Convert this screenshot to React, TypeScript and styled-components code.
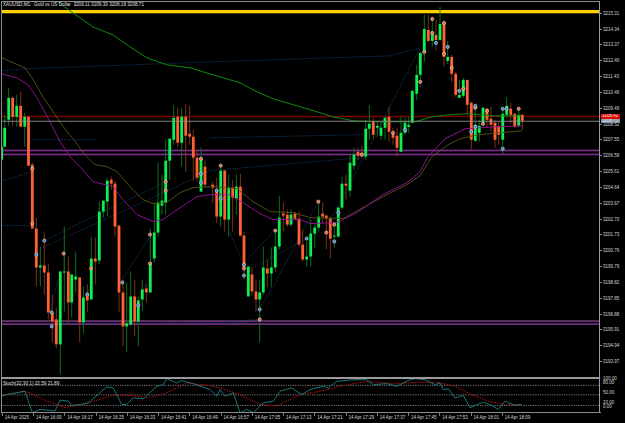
import React from 'react';
import styled, {createGlobalStyle} from 'styled-components';

type Candle = [x: number, top: number, bottom: number, high: number, low: number, up: 0 | 1];
type Pt = [number, number];

const GlobalStyle = createGlobalStyle`
  html, body {
    margin: 0;
    padding: 0;
    background: #000;
  }
`

const candles: Candle[] = [
    [1.7, 147, 160, 125, 160, 1],
    [4.7, 128, 147, 115, 147, 1], [8.7, 98, 120, 88, 126, 1], [12.7, 98, 117, 96, 126, 0], [16.7, 106, 117, 95, 127, 1],
    [20.7, 106, 127, 92, 127, 0], [24.7, 117, 127, 113, 147, 1], [28.5, 117, 166, 117, 166, 0], [32.3, 165, 229, 163, 229, 0],
    [36.3, 229, 268, 218, 287, 0], [40.3, 266, 268, 247, 287, 1], [44.3, 266, 273, 233, 295, 0], [48.3, 273, 313, 264, 320, 0],
    [52.3, 313, 322, 295, 343, 0], [56.3, 320, 345, 308, 349, 0], [60.3, 272, 345, 272, 375, 1], [64.3, 272, 273, 227, 312, 1],
    [68.3, 272, 303, 257, 325, 0], [71.7, 275, 303, 275, 318, 1], [75.7, 277, 280, 252, 293, 1], [79.7, 278, 323, 278, 343, 0],
    [83.4, 298, 323, 287, 334, 1], [87.3, 295, 301, 285, 313, 0], [91.3, 259, 300, 237, 300, 1], [95.3, 259, 262, 238, 285, 0],
    [99.3, 212, 261, 202, 265, 1], [103.3, 201, 212, 201, 218, 1], [107.3, 181, 202, 178, 217, 1], [111.3, 180, 184, 177, 190, 0],
    [115, 184, 227, 181, 237, 0], [119, 226, 293, 226, 313, 0], [123, 293, 327, 280, 347, 0], [126.7, 324, 327, 283, 353, 1],
    [130.7, 297, 325, 272, 327, 1], [134.7, 297, 322, 280, 337, 0], [138.3, 301, 322, 297, 347, 1], [142.3, 290, 300, 280, 312, 1],
    [146.3, 289, 293, 285, 303, 0], [150.3, 263, 293, 229, 293, 1], [154.3, 233, 259, 203, 263, 1], [158, 203, 233, 163, 237, 1],
    [162, 201, 206, 175, 215, 1], [165.7, 161, 203, 140, 215, 1], [169.7, 139, 161, 138, 180, 1], [173.7, 118, 140, 105, 145, 1],
    [177.7, 117, 143, 108, 147, 0], [181.7, 117, 143, 108, 167, 1], [185.7, 117, 136, 104, 172, 0], [189.7, 134, 137, 106, 145, 0],
    [193.3, 137, 158, 130, 181, 0], [197, 158, 178, 150, 182, 0], [201, 158, 192, 148, 192, 1], [205, 167, 185, 160, 188, 0],
    [212.7, 185, 188, 182, 203, 0], [216.7, 190, 217, 178, 223, 0], [220.7, 171, 217, 168, 227, 1], [224.7, 171, 220, 170, 232, 0],
    [228.7, 188, 220, 175, 237, 1], [232.7, 188, 198, 180, 232, 0], [236.4, 187, 199, 175, 215, 1], [240.4, 187, 236, 174, 237, 0],
    [244, 236, 268, 232, 280, 0], [248.3, 267, 297, 267, 297, 1], [252, 275, 292, 268, 296, 0], [256, 292, 300, 280, 312, 0],
    [259.7, 293, 300, 280, 343, 1], [263.3, 268, 293, 247, 295, 1], [267.3, 269, 274, 260, 288, 0], [271.3, 268, 274, 248, 288, 1],
    [275.3, 247, 268, 232, 272, 1], [279.3, 218, 247, 196, 250, 1], [283.3, 214, 216, 203, 232, 0], [287.3, 215, 225, 210, 227, 0],
    [291, 215, 225, 210, 227, 1], [295, 214, 219, 212, 220, 0], [299, 219, 245, 212, 247, 0], [302.7, 245, 260, 230, 262, 0],
    [306.7, 257, 260, 242, 267, 1], [310.7, 234, 257, 220, 267, 1], [314.7, 228, 234, 225, 248, 1], [318.7, 217, 228, 203, 232, 1],
    [322.7, 214, 217, 203, 223, 0], [326.3, 216, 219, 215, 250, 0], [330.3, 219, 239, 217, 259, 0], [334.3, 236, 237, 225, 248, 1],
    [338.3, 208, 237, 207, 238, 1], [342, 184, 208, 177, 210, 1], [346, 184, 186, 175, 200, 0], [350, 163, 191, 154, 197, 1],
    [354, 155, 166, 148, 170, 1], [358, 152, 156, 148, 160, 0], [362, 153, 156, 146, 158, 0], [365.7, 129, 157, 120, 160, 1],
    [369.3, 124, 129, 105, 140, 1], [373.3, 122, 135, 118, 140, 0], [377.3, 126, 128, 122, 137, 1], [381, 128, 136, 122, 140, 1],
    [385, 118, 128, 117, 140, 1], [389, 117, 132, 107, 142, 0], [393, 134, 138, 128, 145, 0], [397, 136, 148, 128, 157, 0],
    [401, 133, 152, 117, 152, 1], [405, 123, 133, 118, 135, 1], [408.7, 125, 127, 117, 133, 1], [412.3, 91, 123, 90, 124, 1],
    [416.7, 75, 94, 65, 100, 1], [420.3, 53, 75, 52, 87, 1], [424.3, 29, 53, 15, 62, 1], [428.3, 30, 41, 15, 42, 0],
    [432.3, 33, 41, 17, 47, 1], [436, 35, 40, 20, 50, 0], [440, 24, 40, 7, 41, 1], [444, 23, 57, 22, 67, 0],
    [447.7, 57, 61, 41, 64, 1], [451.7, 57, 74, 55, 82, 0], [455.7, 74, 95, 72, 97, 0], [459.3, 95, 98, 80, 98, 1],
    [463.3, 80, 96, 78, 98, 1], [467.3, 80, 105, 80, 115, 0], [471.3, 103, 140, 102, 150, 0], [475.3, 125, 141, 107, 142, 1],
    [479.3, 126, 133, 120, 142, 1], [483, 108, 123, 107, 127, 1], [487, 109, 120, 108, 128, 0], [491, 119, 125, 107, 132, 0],
    [495, 123, 140, 120, 148, 0], [498.7, 127, 135, 122, 145, 0], [502.7, 114, 140, 110, 154, 1], [506.7, 106, 115, 97, 118, 1],
    [510.7, 109, 115, 103, 124, 0], [514.7, 114, 127, 113, 128, 0], [518.7, 115, 126, 110, 127, 1], [522.3, 115, 121, 114, 130, 0],
];

const redDots: Pt[] = [
    [432.3, 19], [432.3, 33], [444, 23], [444, 54], [424.3, 52], [420.3, 82], [451.7, 68], [463.3, 89], [475.3, 108], [487, 111],
    [483, 124], [518.7, 109], [393, 133], [220.7, 166], [244, 269], [275.3, 231], [318.3, 202], [326.3, 233], [334.3, 225], [361.7, 155],
    [32.3, 169], [32.3, 224], [63.7, 254], [91, 269], [150, 235], [150, 264], [165.7, 182], [165.7, 191], [201, 159], [259.7, 320],
];

const blueDots: Pt[] = [
    [436, 43], [447.7, 47], [459.3, 91], [475.3, 106], [502.7, 109], [506.7, 109], [475.3, 127], [471.3, 132], [502.7, 149], [405, 130],
    [216.7, 191], [220.7, 199], [244, 265], [244, 276], [306.7, 239], [334.3, 242], [338.3, 213], [44.3, 241], [36.3, 255], [201, 174],
    [201, 183], [51.7, 313], [51.7, 327], [87.3, 295], [122.3, 283], [138.3, 306], [259.7, 310],
];

const zigzags: Pt[][] = [
    [[2, 71], [23, 69], [210, 62], [390, 56], [420, 48]],
    [[210, 138], [363, 135]],
    [[33, 140], [97, 140]],
    [[3, 181], [32, 172]],
    [[2, 226], [32, 226]],
    [[44, 241], [166, 182]],
    [[43, 248], [166, 192], [210, 171], [360, 158]],
    [[122, 280], [150, 237]],
    [[64, 254], [64, 272]],
    [[230, 233], [244, 265]],
    [[247, 260], [275, 231]],
    [[253, 268], [307, 239]],
    [[277, 280], [318, 202]],
    [[327, 227], [373, 140], [420, 48]],
    [[227, 322], [260, 320]],
    [[260, 308], [278, 280]],
    [[50, 313], [58, 280]],
    [[138, 306], [147, 280]],
    [[87, 295], [92, 283]],
    [[50, 324], [250, 323]],
];

const greenMa: Pt[] = [[58, 2], [73, 13], [93, 27], [113, 35], [130, 47], [147, 58], [167, 65], [190, 68], [210, 74], [240, 83], [257, 92], [273, 99], [297, 106], [317, 112], [333, 117], [353, 121], [375, 122], [415, 122], [432, 117], [448, 115], [468, 114], [492, 116], [522, 116]];
const oliveMa: Pt[] = [[2, 58], [25, 68], [32, 78], [43, 97], [55, 115], [67, 132], [74, 140], [83, 153], [95, 165], [107, 167], [117, 172], [130, 187], [143, 200], [153, 204], [167, 203], [180, 193], [193, 188], [210, 187], [237, 189], [253, 202], [270, 212], [293, 213], [310, 218], [343, 219], [363, 208], [383, 197], [407, 185], [420, 176], [432, 157], [448, 145], [460, 139], [478, 135], [522, 131]];
const magentaMa: Pt[] = [[2, 74], [17, 78], [28, 85], [37, 98], [50, 122], [59, 140], [70, 157], [80, 167], [93, 182], [113, 187], [123, 200], [137, 215], [153, 222], [163, 220], [180, 208], [197, 197], [210, 195], [230, 195], [243, 203], [260, 214], [273, 220], [300, 220], [310, 224], [337, 223], [357, 213], [383, 195], [407, 183], [420, 172], [428, 157], [445, 139], [465, 129], [495, 127], [522, 126]];

const stochRaw: Pt[] = [[5, 350], [20, 345], [50, 340], [75, 335], [85, 365], [97, 400], [120, 390], [165, 395], [180, 362], [205, 365], [215, 378], [240, 375], [265, 370], [285, 352], [320, 322], [340, 325], [365, 375], [380, 375], [400, 355], [430, 358], [470, 320], [490, 315], [500, 297], [530, 310], [545, 303], [580, 312], [630, 330], [650, 350], [660, 330], [675, 350], [700, 340], [720, 400], [740, 390], [760, 400], [790, 370], [820, 365], [840, 335], [875, 325], [905, 345], [930, 330], [970, 320], [985, 325], [1010, 305], [1060, 300], [1100, 300], [1120, 315], [1160, 312], [1190, 320], [1230, 300], [1245, 297], [1275, 300], [1305, 315], [1320, 310], [1330, 330], [1345, 328], [1365, 355], [1390, 348], [1410, 385], [1450, 368], [1475, 378], [1495, 390], [1515, 365], [1545, 378], [1565, 375]];
const signalRaw: Pt[] = [[5, 348], [70, 335], [90, 340], [130, 360], [195, 385], [260, 372], [340, 347], [400, 348], [440, 355], [500, 340], [560, 310], [630, 318], [660, 325], [720, 345], [780, 375], [830, 380], [900, 345], [960, 335], [1030, 318], [1100, 305], [1180, 312], [1245, 308], [1315, 308], [1365, 320], [1415, 345], [1465, 365], [1515, 375], [1565, 375]];

const priceLevels = ['3215.31', '3214.34', '3213.37', '3212.40', '3211.43', '3210.46', '3209.49', '3208.52', '3207.55', '3206.58', '3205.61', '3204.64', '3203.67', '3202.70', '3201.73', '3200.76', '3199.79', '3198.82', '3197.85', '3196.88', '3195.91', '3194.94', '3193.97'];
const timeLabels = ['14 Apr 2025', '14 Apr 16:09', '14 Apr 16:17', '14 Apr 16:25', '14 Apr 16:33', '14 Apr 16:41', '14 Apr 16:49', '14 Apr 16:57', '14 Apr 17:05', '14 Apr 17:13', '14 Apr 17:21', '14 Apr 17:29', '14 Apr 17:37', '14 Apr 17:45', '14 Apr 17:53', '14 Apr 18:01', '14 Apr 18:09'];
const stochLevels: [string, number][] = [['100.00', 4.2], ['80.00', 9.4], ['50.00', 10.6], ['20.00', 4], ['0.00', 4]];

const BULL = '#0cf050';
const BEAR = '#ff6232';

const toPoints = (pts: Pt[]) => pts.map(p => p.join(',')).join(' ');
// the stoch curves were read off in 3x crop units
const stochPoints = (raw: Pt[]) => toPoints(raw.map(([x, y]) => [x / 3, 280 + y / 3]));

const Terminal = styled.div`
  width: 625px;
  height: 423px;
  padding: 1px 0 0 1px;
  box-sizing: border-box;
  overflow: hidden;
  background: #000;
  font-family: "Liberation Sans", Arial, sans-serif;
  font-size: 4.5px;
  color: #d4d4d4;
`

const PaneRow = styled.div<{$height: number}>`
  display: grid;
  grid-template-columns: 599px 1fr;
  height: ${props => props.$height}px;
`

const Plot = styled.div<{$divider?: boolean}>`
  position: relative;
  box-sizing: border-box;
  border-top: ${props => props.$divider ? '2px solid #9a9a9a' : '1px solid #8c8c8c'};
  border-left: 1px solid #8c8c8c;
  border-right: 1px solid #9a9a9a;
  overflow: hidden;
`

const ChartSvg = styled.svg`
  display: block;
  width: 100%;
  height: 100%;
  filter: blur(0.3px);
`

const PaneTitle = styled.div<{$top: number}>`
  position: absolute;
  top: ${props => props.$top}px;
  left: 1px;
  line-height: 6px;
  font-size: 4.65px;
  white-space: pre;
  color: #e0e0e0;
`

const PriceAxis = styled.div`
  position: relative;
  padding-top: 4.4px;
`

const PriceLabel = styled.div`
  display: flex;
  align-items: center;
  height: 15.84px;
  gap: 1px;
  &::before {
    content: "";
    width: 2px;
    height: 1px;
    background: #8c8c8c;
  }
`

const PriceTag = styled.div<{$top: number; $bg: string}>`
  position: absolute;
  top: ${props => props.$top}px;
  left: 1px;
  width: 17.5px;
  height: 4.5px;
  line-height: 4.6px;
  padding-left: 1px;
  background: ${props => props.$bg};
  color: #f0f0f0;
  overflow: hidden;
`

const StochAxis = styled.div`
  display: flex;
  flex-direction: column;
  padding: 0 0 0 3px;
`

const StochLabel = styled.div<{$height: number}>`
  height: ${props => props.$height}px;
  line-height: 4.4px;
  white-space: nowrap;
`

const BottomRule = styled.div`
  width: 600px;
  height: 1px;
  background: #8c8c8c;
`

const TimeAxis = styled.div`
  display: flex;
  padding-left: 0.8px;
  height: 9px;
`

const TimeLabel = styled.div`
  flex: 0 0 31.25px;
  box-sizing: border-box;
  padding: 2px 0 0 2px;
  border-left: 1px solid #7a7a7a;
  height: 3.5px;
  line-height: 5px;
  white-space: nowrap;
`

function Dot({x, y, fill}: {x: number; y: number; fill: string}) {
    return <circle cx={x} cy={y} r={1.6} fill={fill} stroke="#ece0d8" strokeWidth={0.6}/>;
}

function MainChart() {
    return (
        <ChartSvg viewBox="2 2 597 376" preserveAspectRatio="none">
            <rect x="0" y="10" width="599" height="3.3" fill="#ffd000"/>
            <rect x="0" y="116" width="599" height="1.4" fill="#7c0404"/>
            <rect x="0" y="149.9" width="599" height="1.7" fill="#7a2c8a"/>
            <rect x="0" y="153.9" width="599" height="1.7" fill="#7a2c8a"/>
            <rect x="0" y="321.1" width="599" height="1.1" fill="#a552b5"/>
            <rect x="0" y="323.8" width="599" height="1.8" fill="#6e2c7e"/>

            {zigzags.map((line, i) => (
                <polyline key={i} points={toPoints(line)} fill="none" stroke="#14406a" strokeWidth={0.9} strokeDasharray="1.2 1.2"/>
            ))}

            {candles.map(([x, top, bottom, high, low, up]) => (
                <g key={x}>
                    <line x1={x} x2={x} y1={high} y2={low} stroke={up ? '#0a7a24' : '#8a3516'} strokeWidth={0.9}/>
                    <rect x={x - 1.4} y={top} width={2.8} height={Math.max(bottom - top, 1)} fill={up ? BULL : BEAR}/>
                </g>
            ))}

            <polyline points={toPoints(greenMa)} fill="none" stroke="#0d8a0d" strokeWidth={1}/>
            <polyline points={toPoints(oliveMa)} fill="none" stroke="#55551a" strokeWidth={0.9}/>
            <polyline points={toPoints(magentaMa)} fill="none" stroke="#9a129a" strokeWidth={0.9}/>

            <rect x="0" y="121" width="599" height="0.9" fill="#8e8e8e"/>

            {redDots.map(([x, y]) => <Dot key={`r${x}-${y}`} x={x} y={y} fill="#e8603a"/>)}
            {blueDots.map(([x, y]) => <Dot key={`b${x}-${y}`} x={x} y={y} fill="#2f86d8"/>)}
        </ChartSvg>
    );
}

function StochChart() {
    return (
        <ChartSvg viewBox="2 379.3 597 33" preserveAspectRatio="none">
            {[385.7, 395.3, 406].map(y => (
                <line key={y} x1="0" x2="599" y1={y} y2={y} stroke="#9c9c9c" strokeWidth={0.8} strokeDasharray="1.2 1.2"/>
            ))}
            <polyline points={stochPoints(signalRaw)} fill="none" stroke="#b01212" strokeWidth={0.9} strokeDasharray="2 1"/>
            <polyline points={stochPoints(stochRaw)} fill="none" stroke="#1c8282" strokeWidth={0.9}/>
        </ChartSvg>
    );
}

export default function App() {
    return (
        <Terminal>
            <GlobalStyle/>
            <PaneRow $height={376.3}>
                <Plot>
                    <MainChart/>
                    <PaneTitle $top={0}>XAUUSD,M1:  Gold vs US Dollar  3209.11 3209.30 3208.18 3208.71</PaneTitle>
                </Plot>
                <PriceAxis>
                    {priceLevels.map(price => <PriceLabel key={price}>{price}</PriceLabel>)}
                    <PriceTag $top={113.3} $bg="#e60000">3208.42</PriceTag>
                    <PriceTag $top={117.8} $bg="#7f8fa0">3208.71</PriceTag>
                </PriceAxis>
            </PaneRow>
            <PaneRow $height={34.7}>
                <Plot $divider>
                    <StochChart/>
                    <PaneTitle $top={1.4}>Stoch(22,30,1) 22.59 21.89</PaneTitle>
                </Plot>
                <StochAxis>
                    {stochLevels.map(([label, height]) => <StochLabel key={label} $height={height}>{label}</StochLabel>)}
                </StochAxis>
            </PaneRow>
            <BottomRule/>
            <TimeAxis>
                {timeLabels.map(label => <TimeLabel key={label}>{label}</TimeLabel>)}
            </TimeAxis>
        </Terminal>
    );
}
